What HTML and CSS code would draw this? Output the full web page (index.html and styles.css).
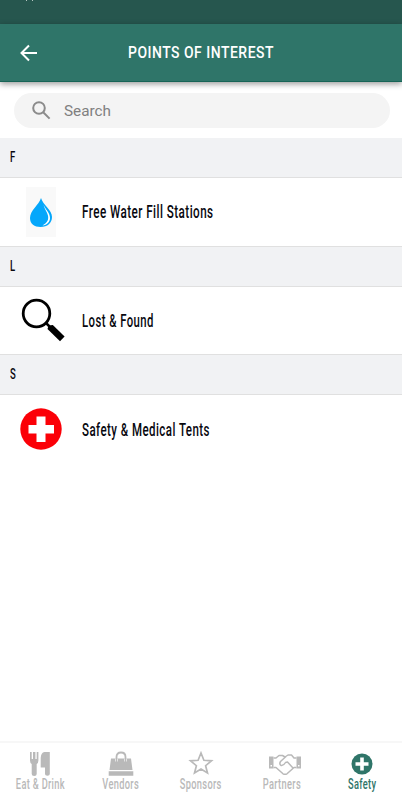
FILE: index.html
```html
<!DOCTYPE html>
<html lang="en">
<head>
<meta charset="utf-8">
<title>Points of Interest</title>
<link rel="stylesheet" href="styles.css">
</head>
<body>
<div class="app">
  <div class="status"><i></i><i></i></div>
  <header class="header">
    <svg class="back" width="18" height="18" viewBox="0 0 18 18" fill="none" stroke="#fff" stroke-width="2"><path d="M17 9H2M9 1.500L1.500 9L9 16.500"/></svg>
    <h1><span class="title">POINTS OF INTEREST</span></h1>
  </header>
  <div class="search">
    <svg width="19" height="19" viewBox="0 0 19 19" fill="none" stroke="#8b8b8b" stroke-width="2"><circle cx="7" cy="7" r="5.800"/><path d="M11.200 11.200L17.600 17.600"/></svg>
    <span>Search</span>
  </div>
  <main>
    <h2><span>F</span></h2>
    <div class="row">
      <div class="thumb">
        <svg width="30" height="50" viewBox="0 0 30 50"><path fill="#f9f9f9" d="M0 0h30v50H0z"/><path fill="#05a7fb" d="M15 11C13 18 4 23 4 31C4 37 8.500 40 14.500 40C21.500 40 26 36 26 30C26 23 17 18 15 11Z"/><path fill="#fff" d="M17.500 18C20 23 24 26 24 31C24 35 21 38 16.500 38.500C20.500 36 22.300 34 22.200 30C22 26 19 23 17.500 18Z"/></svg>
      </div>
      <span class="name water">Free Water Fill Stations</span>
    </div>
    <h2><span>L</span></h2>
    <div class="row">
      <div class="thumb lens">
        <svg width="44" height="44" viewBox="0 0 44 44"><circle cx="15.500" cy="15.500" r="13.300" fill="none" stroke="#000" stroke-width="2.800"/><path d="M25 25L30 30" stroke="#000" stroke-width="2.500"/><path d="M26.500 31Q27 27 31.800 27L43.600 38.500L39 43.300Z"/></svg>
      </div>
      <span class="name lost">Lost &amp; Found</span>
    </div>
    <h2><span>S</span></h2>
    <div class="row">
      <div class="thumb">
        <svg width="42" height="42" viewBox="0 0 42 42"><circle cx="21" cy="21" r="20.700" fill="#fb0007"/><path fill="#fff" d="M16.500 8.500h9v8.500h8.500v8.500h-8.500v8.500h-9v-8.500H8.500V17h8z"/></svg>
      </div>
      <span class="name medical">Safety &amp; Medical Tents</span>
    </div>
  </main>
  <nav class="tabs">
    <div class="tab">
      <svg width="22" height="26" viewBox="0 0 22 26" fill="#b9b9b9"><path d="M1 1h1.700v7h1.300V1h2.400v7h1.300V1h1.700v8.500Q9.400 12 7.700 13V23Q7.700 25 5.200 25T2.700 23V13Q1 12 1 9.500zM20.800 1v22q0 1.800-2.400 1.800T16 23v-6.500H11.700V7Q12 1.500 15.500 1z"/></svg>
      <span class="eat">Eat &amp; Drink</span>
    </div>
    <div class="tab">
      <svg width="26" height="26" viewBox="0 0 26 26" fill="#b9b9b9"><path d="M3 7.500h20l1.500 11.500H1.500zM.7 20.300h24.600v4.500H.7z"/><path d="M8.500 10.500V7.500M17.500 10.500V7.500" fill="none" stroke="#fff" stroke-width="3"/><path d="M8.500 11V6Q8.500 1.500 13 1.500T17.500 6v5" fill="none" stroke="#b9b9b9" stroke-width="1.800"/></svg>
      <span class="vendors">Vendors</span>
    </div>
    <div class="tab">
      <svg width="26" height="26" viewBox="0 0 26 26" fill="none" stroke="#b9b9b9" stroke-width="1.700"><path d="M13 2L15.900 9.300L23.500 9.800L17.600 14.700L19.500 22L13 18L6.500 22L8.400 14.700L2.500 9.800L10.100 9.300Z"/></svg>
      <span class="sponsors">Sponsors</span>
    </div>
    <div class="tab">
      <svg class="shake" width="34" height="26" viewBox="0 0 34 26" fill="none" stroke="#b9b9b9" stroke-width="1.500" stroke-linejoin="round"><path fill="#b9b9b9" stroke="none" d="M1 5.500h4.500v12H1zM28.500 5.500H33v12h-4.500z"/><path d="M5.500 7H8l3-2.500h3.500L17 6l3-2h3.500L26 7h2.500M5.500 16.500H8l7 6.300q2 1 4 0L26 16.500h2.500M18 5.500l-5.500 5q-1.500 2.500.5 4 2.500.5 4.500-3l2-.5 5.500 6"/><path fill="#fff" stroke="none" d="M2.500 14h1.500v1.500H2.500zM30 14h1.500v1.500H30z"/></svg>
      <span class="partners">Partners</span>
    </div>
    <div class="tab active">
      <svg width="22" height="26" viewBox="0 0 22 26"><circle cx="11" cy="13" r="10.500" fill="#2f7569"/><path fill="#fff" d="M9.200 6.500h3.600v4.700h4.700v3.600h-4.700v4.700H9.200v-4.700H4.500v-3.600h4.700z"/></svg>
      <span class="safety">Safety</span>
    </div>
  </nav>
</div>
</body>
</html>
```
FILE: styles.css
```css
* { box-sizing: border-box; }
body { margin: 0; background: #fff; font-family: Roboto, "Liberation Sans", sans-serif; }
.app { width: 402px; height: 800px; display: flex; flex-direction: column; overflow: hidden; }
svg { display: block; flex: none; }
.status { height: 24px; flex: none; background: #26564e; display: flex; gap: 5px; padding-left: 26px; }
.status i { width: 1px; height: 1px; background: #b5c6c2; }
.header { height: 58px; flex: none; display: flex; align-items: center; background: #2f7569; border-bottom: 1px solid #176456; box-shadow: 0 2px 6px rgba(0,0,0,.4); padding-left: 20px; }
h1 { margin: 0 0 0 90px; font-size: 16px; line-height: 20px; font-weight: 500; color: #fff; white-space: nowrap; }
.title, .name, h2 span, .tab span { display: inline-block; white-space: nowrap; }
.title { letter-spacing: .6px; transform-origin: left; transform: scaleX(.87); }
.search { height: 35px; flex: none; margin: 11px 12px 10px 14px; border-radius: 18px; background: #f4f4f4; display: flex; align-items: center; gap: 13px; padding-left: 18px; color: #808080; font-size: 15.300px; }
main { flex: 1; }
h2 { margin: 0; height: 40px; padding-left: 10px; background: #f1f2f4; border-bottom: 1px solid #e0e0e0; font-size: 14px; font-weight: 500; line-height: 38px; color: #08080f; }
h2 span { transform-origin: left; transform: scaleX(.68); }
.row { height: 68.500px; display: flex; align-items: center; border-bottom: 1px solid #e0e0e0; }
.row:last-child { border: 0; }
.thumb { width: 82px; display: flex; justify-content: center; }
.lens { padding-left: 3px; }
.name { font-size: 18px; font-weight: 500; color: #08080f; transform-origin: left; }
.water { letter-spacing: .7px; transform: scaleX(.648); }
.lost { letter-spacing: .7px; transform: scaleX(.63); }
.medical { letter-spacing: .7px; transform: scaleX(.64); }
.tabs { height: 59px; flex: none; border-top: 2px solid #f7f7f7; display: grid; grid-template-columns: repeat(5, 80.400px); padding-top: 8px; }
.tab { display: flex; flex-direction: column; align-items: center; color: #b9b9b9; font-size: 14.500px; line-height: 15px; font-weight: 500; }
.tab span { letter-spacing: .5px; transform: scaleX(.64); }
.shake { margin-left: 7px; }
.active { color: #2f7569; }
```
